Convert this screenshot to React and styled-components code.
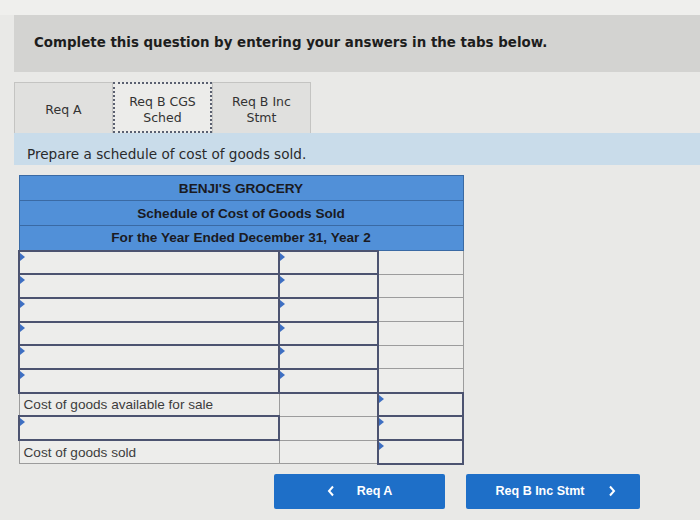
import React from "react";
import styled, { createGlobalStyle } from "styled-components";

const Global = createGlobalStyle`
  html, body { margin: 0; padding: 0; }
  body {
    width: 700px;
    height: 520px;
    overflow: hidden;
    background: #e9e9e7;
    font-family: "DejaVu Sans", Verdana, sans-serif;
  }
`;

const TopStrip = styled.div`
  height: 15px;
  background: #efefed;
`;

const Page = styled.div`
  padding-left: 14px;
`;

const Instruction = styled.div`
  height: 57px;
  background: #d3d3d1;
  display: flex;
  align-items: center;
  padding-left: 20px;
  font-weight: bold;
  font-size: 13.4px;
  color: #1d1d1d;
  padding-bottom: 2px;
  box-sizing: border-box;
`;

const Tabs = styled.div`
  display: flex;
  margin-top: 10px;
  height: 51px;
`;

const Tab = styled.div`
  width: 99px;
  box-sizing: border-box;
  display: flex;
  align-items: center;
  justify-content: center;
  text-align: center;
  font-size: 12.5px;
  line-height: 16px;
  color: #333;
  background: ${(p) => (p.$active ? "#ececea" : "#e0e0de")};
  border: ${(p) => (p.$active ? "2px dotted #5a6070" : "1px solid #c4c4c2")};
  border-bottom: ${(p) => (p.$active ? "2px dotted #5a6070" : "none")};
  padding-top: 4px;
`;

const Prompt = styled.div`
  height: 32px;
  background: #c9dcea;
  display: flex;
  align-items: center;
  padding-left: 13px;
  padding-top: 9px;
  box-sizing: border-box;
  font-size: 13.6px;
  color: #2a2a2a;
`;

const Table = styled.table`
  margin: 10px 0 0 4px;
  border-collapse: collapse;
  font-family: "Liberation Sans", Arial, sans-serif;
  table-layout: fixed;
  width: 444px;
`;

const HeadRow = styled.tr`
  height: 25px;
`;

const Row = styled.tr`
  height: 23.7px;
`;

const HeadCell = styled.td`
  padding: 0;
  background: #5190d8;
  border: 1px solid #3a6aa4;
  text-align: center;
  font-weight: bold;
  font-size: 13.6px;
  color: #1a1a22;
`;

const Cell = styled.td`
  position: relative;
  padding: 0 4px;
  box-sizing: border-box;
  background: #ededeb;
  border: ${(p) => (p.$input ? "2px solid #4c5370" : "1px solid #9c9c9c")};
  font-size: 13.6px;
  color: #3c3c3c;
  white-space: nowrap;
`;

const Marker = styled.span`
  position: absolute;
  left: 0;
  top: 1px;
  width: 0;
  height: 0;
  border-top: 4px solid transparent;
  border-bottom: 4px solid transparent;
  border-left: 5px solid #3e6fc2;
`;

const Buttons = styled.div`
  display: flex;
  gap: 21px;
  margin: 9px 0 0 260px;
`;

const NavButton = styled.button`
  width: ${(p) => p.$w}px;
  height: 35px;
  border: none;
  border-radius: 2px;
  background: #1e6fc8;
  color: #fff;
  font-family: "Liberation Sans", Arial, sans-serif;
  font-weight: bold;
  font-size: 12.5px;
  display: flex;
  align-items: center;
  justify-content: center;
  gap: ${(p) => p.$gap}px;
  padding: 0;
  padding-left: ${(p) => p.$pl || 0}px;
`;

const Chevron = ({ dir }) => (
  <svg width="8" height="12" viewBox="0 0 8 12">
    <path
      d={dir === "left" ? "M6 1.5 L2 6 L6 10.5" : "M2 1.5 L6 6 L2 10.5"}
      fill="none"
      stroke="#fff"
      strokeWidth="2"
    />
  </svg>
);

const In = ({ children }) => (
  <Cell $input>
    <Marker />
    {children}
  </Cell>
);

const rows = [0, 1, 2, 3, 4, 5];

export default function App() {
  return (
    <>
      <Global />
      <TopStrip />
      <Page>
        <Instruction>Complete this question by entering your answers in the tabs below.</Instruction>
        <Tabs>
          <Tab>Req A</Tab>
          <Tab $active>
            Req B CGS
            <br />
            Sched
          </Tab>
          <Tab>
            Req B Inc
            <br />
            Stmt
          </Tab>
        </Tabs>
        <Prompt>Prepare a schedule of cost of goods sold.</Prompt>
        <Table>
          <colgroup>
            <col style={{ width: 260 }} />
            <col style={{ width: 99 }} />
            <col style={{ width: 85 }} />
          </colgroup>
          <tbody>
            <HeadRow>
              <HeadCell colSpan={3}>BENJI'S GROCERY</HeadCell>
            </HeadRow>
            <HeadRow>
              <HeadCell colSpan={3}>Schedule of Cost of Goods Sold</HeadCell>
            </HeadRow>
            <HeadRow>
              <HeadCell colSpan={3}>For the Year Ended December 31, Year 2</HeadCell>
            </HeadRow>
            {rows.map((r) => (
              <Row key={r}>
                <In />
                <In />
                <Cell />
              </Row>
            ))}
            <Row>
              <Cell>Cost of goods available for sale</Cell>
              <Cell />
              <In />
            </Row>
            <Row>
              <In />
              <Cell />
              <In />
            </Row>
            <Row>
              <Cell>Cost of goods sold</Cell>
              <Cell />
              <In />
            </Row>
          </tbody>
        </Table>
        <Buttons>
          <NavButton $w={171} $gap={22}>
            <Chevron dir="left" />
            Req A
          </NavButton>
          <NavButton $w={174} $gap={24} $pl={6}>
            Req B Inc Stmt
            <Chevron dir="right" />
          </NavButton>
        </Buttons>
      </Page>
    </>
  );
}
